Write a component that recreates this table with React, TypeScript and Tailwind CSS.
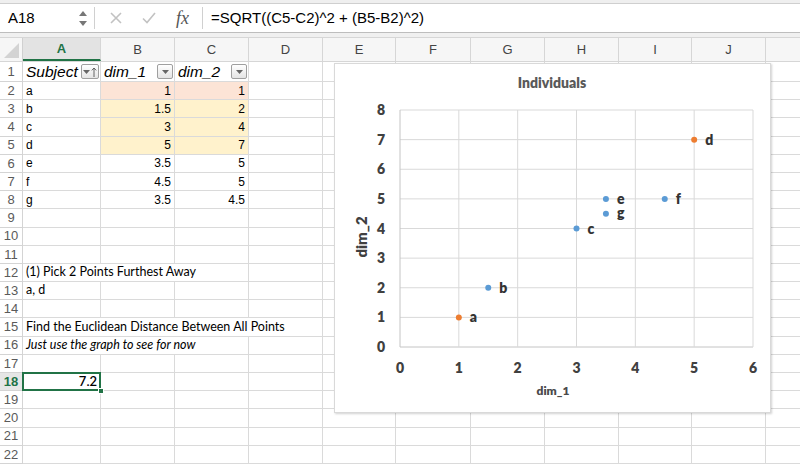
import React from "react";

const COL_W = [78, 74, 74, 74, 73, 75, 74, 74, 73, 74, 40];
const LETTERS = ["A", "B", "C", "D", "E", "F", "G", "H", "I", "J", ""];

type Cell = {
  text?: string;
  span?: number;
  right?: boolean;
  bg?: string;
  font?: string;
};

const data: Record<number, Cell[]> = {
  2: [{ text: "a" }, { text: "1", right: true, bg: "bg-[#fce4d6]" }, { text: "1", right: true, bg: "bg-[#fce4d6]" }],
  3: [{ text: "b" }, { text: "1.5", right: true, bg: "bg-[#fff2cc]" }, { text: "2", right: true, bg: "bg-[#fff2cc]" }],
  4: [{ text: "c" }, { text: "3", right: true, bg: "bg-[#fff2cc]" }, { text: "4", right: true, bg: "bg-[#fff2cc]" }],
  5: [{ text: "d" }, { text: "5", right: true, bg: "bg-[#fff2cc]" }, { text: "7", right: true, bg: "bg-[#fff2cc]" }],
  6: [{ text: "e" }, { text: "3.5", right: true }, { text: "5", right: true }],
  7: [{ text: "f" }, { text: "4.5", right: true }, { text: "5", right: true }],
  8: [{ text: "g" }, { text: "3.5", right: true }, { text: "4.5", right: true }],
  12: [{ text: "(1) Pick 2 Points Furthest Away", span: 3, font: "font-['Lato',sans-serif] text-[12.5px]" }],
  13: [{ text: "a, d", font: "font-['Lato',sans-serif] text-[12.5px]" }],
  15: [{ text: "Find the Euclidean Distance Between All Points", span: 4, font: "font-['Lato',sans-serif] text-[12.5px]" }],
  16: [{ text: "Just use the graph to see for now", span: 3, font: "font-['Lato',sans-serif] text-[12.5px] italic" }],
  18: [{ text: "7.2", right: true, font: "font-['Lato',sans-serif] text-[13px] font-semibold" }],
};

const FilterBtn = ({ sorted }: { sorted?: boolean }) => (
  <span
    className={`flex items-center justify-center gap-[1px] h-[15px] ${sorted ? "w-[18px]" : "w-[16px]"} rounded-[2px] border border-[#9f9f9f] bg-linear-to-b from-white to-[#e4e4e4] shrink-0`}
  >
    <svg width="7" height="4" viewBox="0 0 7 4">
      <path d="M0 0 L7 0 L3.5 4 Z" fill="#666" />
    </svg>
    {sorted && (
      <svg width="6" height="10" viewBox="0 0 6 10">
        <path d="M3 1 V10 M0.8 3.4 L3 1 L5.2 3.4" stroke="#555" strokeWidth="0.9" fill="none" />
      </svg>
    )}
  </span>
);

const RowNum = ({ n, h }: { n: number; h: string }) => (
  <div
    className={`${h} w-[23px] shrink-0 flex items-center justify-center border-r border-b border-[#d4d4d4] text-[13px] ${
      n === 18 ? "text-[#217346] font-bold bg-[#e6e6e6]" : "text-[#5a5a5a] bg-white"
    }`}
  >
    {n}
  </div>
);

function DataRow({ n }: { n: number }) {
  const cells = data[n] ?? [];
  const out: React.ReactNode[] = [];
  let col = 0;
  let i = 0;
  while (col < COL_W.length) {
    const c = cells[i] ?? {};
    const span = c.span ?? 1;
    const w = COL_W.slice(col, col + span).reduce((a, b) => a + b, 0);
    const selected = n === 18 && col === 0;
    out.push(
      <div
        key={col}
        style={{ width: w }}
        className={`relative shrink-0 h-full flex items-center px-[3px] whitespace-nowrap border-r border-b border-[#dadada] ${
          c.bg ?? ""
        } ${c.right ? "justify-end" : "justify-start"} ${c.font ?? "text-[12px]"} ${selected ? "z-10" : ""}`}
      >
        {c.text}
        {selected && (
          <>
            <span className="absolute -left-[1px] -top-[1px] -right-[1px] -bottom-[1px] border-2 border-[#217346]" />
            <span className="absolute -right-[4px] -bottom-[4px] w-[6px] h-[6px] bg-[#217346] border border-white" />
          </>
        )}
      </div>
    );
    col += span;
    i++;
  }
  return (
    <div className="flex h-[18.2px]">
      <RowNum n={n} h="h-full" />
      {out}
    </div>
  );
}

const px = (x: number) => 65 + (x * 353) / 6;
const py = (y: number) => 283 - (y * 237) / 8;

const points: [string, number, number, string][] = [
  ["a", 1, 1, "#ed7d31"],
  ["b", 1.5, 2, "#5b9bd5"],
  ["c", 3, 4, "#5b9bd5"],
  ["d", 5, 7, "#ed7d31"],
  ["e", 3.5, 5, "#5b9bd5"],
  ["f", 4.5, 5, "#5b9bd5"],
  ["g", 3.5, 4.5, "#5b9bd5"],
];

function Chart() {
  const txt = { fontFamily: "Lato, sans-serif", fontWeight: 800, fill: "#404040" } as const;
  return (
    <div className="absolute left-[334px] top-[63px] w-[437px] h-[350px] bg-white border border-[#d9d9d9] shadow-[1px_1px_2px_rgba(0,0,0,0.18)]">
      <svg width="435" height="348" viewBox="0 0 435 348">
        <text x="217" y="24" textAnchor="middle" fontSize="14" style={{ ...txt, fill: "#595959" }}>
          Individuals
        </text>
        {[0, 1, 2, 3, 4, 5, 6, 7, 8].map((v) => (
          <g key={"y" + v}>
            <line x1={65} x2={418} y1={py(v)} y2={py(v)} stroke={v === 0 ? "#c4c4c4" : "#d9d9d9"} strokeWidth="1" />
            <text x="50" y={py(v) + 5} textAnchor="end" fontSize="14" style={txt}>
              {v}
            </text>
          </g>
        ))}
        {[0, 1, 2, 3, 4, 5, 6].map((v) => (
          <g key={"x" + v}>
            <line x1={px(v)} x2={px(v)} y1={46} y2={283} stroke={v === 0 ? "#c4c4c4" : "#d9d9d9"} strokeWidth="1" />
            <text x={px(v)} y="309" textAnchor="middle" fontSize="14" style={txt}>
              {v}
            </text>
          </g>
        ))}
        <text x="218" y="331" textAnchor="middle" fontSize="12" style={{ ...txt, fill: "#4a4a4a" }}>
          dim_1
        </text>
        <text
          x="0"
          y="0"
          textAnchor="middle"
          fontSize="15"
          transform="translate(32 173) rotate(-90)"
          style={txt}
        >
          dim_2
        </text>
        {points.map(([l, x, y, c]) => (
          <g key={l}>
            <circle cx={px(x)} cy={py(y)} r="3" fill={c} />
            <text x={px(x) + 11} y={py(y) + (l === "g" ? 4 : 5)} fontSize="14" style={{ ...txt, fill: "#333" }}>
              {l}
            </text>
          </g>
        ))}
      </svg>
    </div>
  );
}

export default function App() {
  return (
    <div className="relative w-[800px] h-[468px] overflow-hidden bg-white font-['Liberation_Sans',Arial,sans-serif] text-black">
      {/* formula bar */}
      <div className="h-[4px] bg-[#efefef] border-b border-[#cfcfcf]" />
      <div className="flex items-center h-[29px] bg-white border-b border-[#bdbdbd]">
        <div className="w-[94px] h-full flex items-center justify-between pl-[8px] pr-[7px]">
          <span className="text-[15px]">A18</span>
          <span className="flex flex-col gap-[5px]">
            <svg width="8" height="5" viewBox="0 0 8 5">
              <path d="M0 5 L4 0 L8 5 Z" fill="#777" />
            </svg>
            <svg width="8" height="5" viewBox="0 0 8 5">
              <path d="M0 0 L8 0 L4 5 Z" fill="#777" />
            </svg>
          </span>
        </div>
        <div className="w-px h-[22px] bg-[#d0d0d0]" />
        <div className="flex items-center gap-[20px] pl-[15px] w-[107px]">
          <svg width="12" height="12" viewBox="0 0 12 12">
            <path d="M1 1 L11 11 M11 1 L1 11" stroke="#c2c2c2" strokeWidth="1.6" />
          </svg>
          <svg width="14" height="12" viewBox="0 0 14 12">
            <path d="M1 6.5 L5 10.5 L13 1" stroke="#c2c2c2" strokeWidth="1.6" fill="none" />
          </svg>
          <span className="font-['Liberation_Serif',serif] italic text-[18px] text-[#555] leading-none">fx</span>
        </div>
        <div className="w-px h-[22px] bg-[#d0d0d0]" />
        <span className="pl-[8px] text-[15px]">=SQRT((C5-C2)^2 + (B5-B2)^2)</span>
      </div>
      <div className="h-[4px] bg-[#f0f0f0]" />
      {/* column headers */}
      <div className="flex h-[25px] bg-[#f6f6f6] border-b border-[#c9c9c9] border-t border-[#d6d6d6]">
        <div className="w-[23px] shrink-0 h-full border-r border-[#d0d0d0] flex items-end justify-end p-[3px]">
          <svg width="15" height="15" viewBox="0 0 15 15">
            <path d="M15 0 L15 15 L0 15 Z" fill="#d3d3d3" />
          </svg>
        </div>
        {LETTERS.map((l, i) => (
          <div
            key={i}
            style={{ width: COL_W[i] }}
            className={`shrink-0 h-full flex items-center justify-center text-[13px] border-r border-[#d6d6d6] ${
              i === 0 ? "bg-[#e3e3e3] text-[#217346] font-bold border-b-2 border-b-[#217346]" : "text-[#444]"
            }`}
          >
            {l}
          </div>
        ))}
      </div>
      {/* row 1 */}
      <div className="flex h-[20px]">
        <RowNum n={1} h="h-full" />
        {COL_W.map((w, i) => (
          <div
            key={i}
            style={{ width: w }}
            className="shrink-0 h-full flex items-center justify-between pl-[3px] pr-[1px] border-r border-b border-[#dadada] italic text-[15.5px] whitespace-nowrap"
          >
            {i === 0 && (
              <>
                <span>Subject</span>
                <FilterBtn sorted />
              </>
            )}
            {i === 1 && (
              <>
                <span>dim_1</span>
                <FilterBtn />
              </>
            )}
            {i === 2 && (
              <>
                <span>dim_2</span>
                <FilterBtn />
              </>
            )}
          </div>
        ))}
      </div>
      {Array.from({ length: 21 }, (_, k) => k + 2).map((n) => (
        <DataRow key={n} n={n} />
      ))}
      <Chart />
    </div>
  );
}
